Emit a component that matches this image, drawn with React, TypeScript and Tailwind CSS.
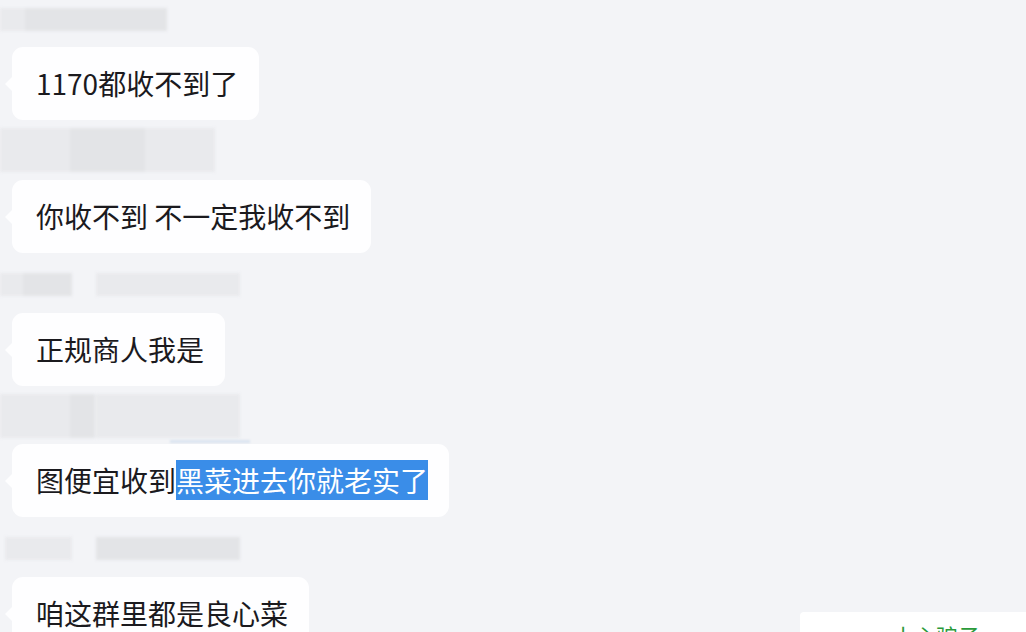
const font = {
  fontFamily: '"Microsoft YaHei", "Noto Sans CJK SC", "Noto Sans", sans-serif',
};

function NameBar({ widths, tall }: { widths: [number, number][]; tall?: boolean }) {
  // blurred member names above the bubbles
  return (
    <div className={`relative ${tall ? "h-[44px]" : "h-[23px]"} blur-[1.5px]`}>
      {widths.map(([left, w], i) => (
        <div
          key={i}
          className={`absolute top-0 h-full ${i % 2 === 0 ? "bg-[#e9eaed]" : "bg-[#e3e4e7]"}`}
          style={{ left, width: w }}
        />
      ))}
    </div>
  );
}

function Bubble({ children, className = "" }: { children: React.ReactNode; className?: string }) {
  return (
    <div className={`relative ml-[12px] w-fit rounded-[11px] bg-[#fefeff] pl-[24px] pr-[21px] h-[73px] flex items-center ${className}`}>
      <span className="absolute -left-[7px] top-[30px] h-0 w-0 border-y-[7px] border-r-[7px] border-y-transparent border-r-[#fefeff]" />
      <p className="text-[28px] leading-none text-[#1b1a1e] whitespace-nowrap -mt-[2px]" style={font}>
        {children}
      </p>
    </div>
  );
}

export default function App() {
  return (
    <div className="h-[632px] w-[1026px] overflow-hidden bg-[#f3f4f7]">
      <div className="flex flex-col">
        <div className="mt-[8px]">
          <NameBar widths={[[0, 25], [25, 142]]} />
        </div>

        <div className="mt-[16px]">
          <Bubble>1170都收不到了</Bubble>
        </div>

        <div className="mt-[8px]">
          <NameBar tall widths={[[0, 70], [70, 75], [145, 70]]} />
        </div>

        <div className="mt-[8px]">
          <Bubble>你收不到 不一定我收不到</Bubble>
        </div>

        <div className="mt-[20px]">
          <NameBar widths={[[0, 23], [23, 49], [96, 144]]} />
        </div>

        <div className="mt-[17px]">
          <Bubble>正规商人我是</Bubble>
        </div>

        <div className="mt-[8px]">
          <NameBar tall widths={[[0, 70], [70, 25], [96, 144]]} />
        </div>

        <div className="relative mt-[6px]">
          <div className="absolute left-[170px] -top-[4px] h-[3px] w-[80px] bg-[#dbe4f0] blur-[1px]" />
          <Bubble>
            图便宜收到
            <span className="bg-[#3a8de8] text-white">黑菜进去你就老实了</span>
          </Bubble>
        </div>

        <div className="mt-[20px]">
          <NameBar widths={[[5, 67], [96, 144]]} />
        </div>

        <div className="mt-[17px] flex items-start justify-between">
          <Bubble>咱这群里都是良心菜</Bubble>
          <div className="mt-[35px] h-[40px] w-[226px] overflow-hidden rounded-tl-[4px] bg-white pl-[92px] pt-[12px]">
            <span className="text-[22px] leading-none text-[#2a9a3a]" style={font}>
              小心骗子
            </span>
          </div>
        </div>
      </div>
    </div>
  );
}
